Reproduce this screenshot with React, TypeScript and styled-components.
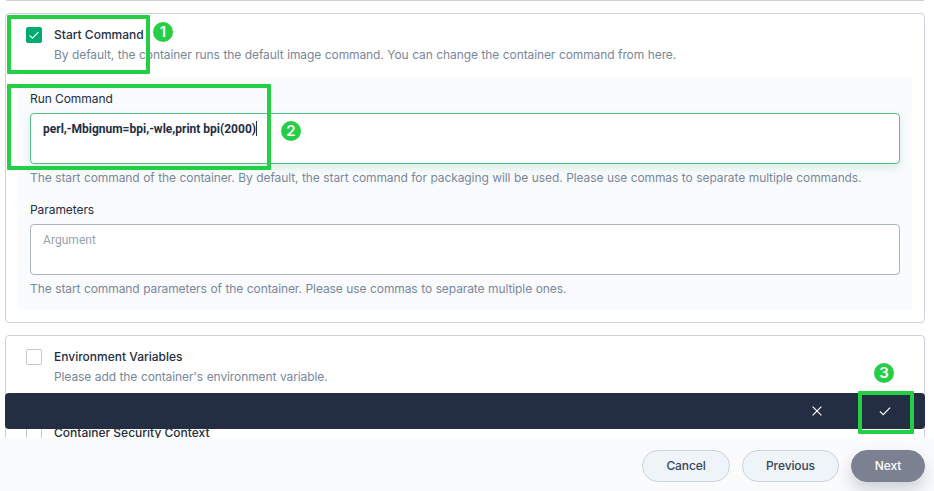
import React from "react";
import styled, { createGlobalStyle, css } from "styled-components";

const GlobalStyle = createGlobalStyle`
  *, *::before, *::after { box-sizing: border-box; }
  body { margin: 0; background: #fff; overflow: hidden; }
`;

const Page = styled.div`
  position: relative;
  display: flex;
  flex-direction: column;
  width: 934px;
  height: 491px;
  overflow: hidden;
  font-family: Inter, "Liberation Sans", sans-serif;
  font-size: 12px;
  line-height: 20px;
  color: #242e42;
`;

const Content = styled.main`
  position: relative;
  display: flex;
  flex-direction: column;
  gap: 12px;
  height: 438px;
  padding: 0 9px 0 5px;
  overflow: hidden;
`;

const Card = styled.section`
  flex: none;
  padding: 11px 12px;
  background: #fff;
  border: 1px solid #ccd3db;
  border-radius: 4px;
`;

const CardEnd = styled.div`
  flex: none;
  height: 1px;
  margin: 0 1px;
  background: #ccd3db;
`;

const CardHeader = styled.header`
  display: flex;
  gap: 12px;
  padding-left: 8px;
`;

const Checkbox = styled.span<{ $checked?: boolean }>`
  display: flex;
  flex: none;
  align-items: center;
  justify-content: center;
  width: 16px;
  height: 16px;
  margin-top: 2px;
  border: 1px solid ${(p) => (p.$checked ? "#00aa72" : "#c1c9d1")};
  border-radius: 2px;
  background: ${(p) => (p.$checked ? "#00aa72" : "#fff")};
`;

const Title = styled.div`
  font-weight: 500;
`;

const Hint = styled.div`
  color: #79879c;
  letter-spacing: -0.1px;
  word-spacing: 0.35px;
  white-space: nowrap;
`;

const Panel = styled.div`
  display: flex;
  flex-direction: column;
  gap: 12px;
  margin-top: 12px;
  padding: 12px;
  background: #f9fbfd;
  border-radius: 4px;
`;

const Field = styled.div`
  display: flex;
  flex-direction: column;
  gap: 4px;
`;

const Label = styled.div`
  letter-spacing: -0.07px;
`;

const TextBox = styled.div<{ $focused?: boolean }>`
  display: flex;
  align-items: flex-start;
  height: 51px;
  padding: 5px 12px;
  font-family: Roboto, sans-serif;
  background: #fff;
  border: 1px solid #abb4be;
  border-radius: 4px;
  ${(p) =>
    p.$focused &&
    css`
      border-color: #55bc8a;
      box-shadow: 0 4px 8px 0 rgba(85, 188, 138, 0.2);
    `}
`;

const Value = styled.span`
  font-weight: 700;
`;

const Caret = styled.span`
  width: 1px;
  height: 15px;
  margin-top: 2px;
  background: #242e42;
`;

const Placeholder = styled.span`
  color: #98a2ae;
  letter-spacing: 0.05px;
`;

const ConfirmBar = styled.div`
  position: absolute;
  right: 9px;
  bottom: 9px;
  left: 5px;
  display: flex;
  align-items: center;
  justify-content: flex-end;
  gap: 52px;
  height: 36px;
  padding-right: 32px;
  background: #242e42;
  border-radius: 4px;
`;

const Footer = styled.footer`
  display: flex;
  gap: 12px;
  justify-content: flex-end;
  height: 53px;
  padding: 12px 9px 0 0;
  background: #f9fbfd;
`;

const Button = styled.button<{ $width: number; $primary?: boolean }>`
  width: ${(p) => p.$width}px;
  height: 32px;
  padding: 0;
  font: 500 12px/20px Inter, sans-serif;
  letter-spacing: -0.1px;
  color: #36435c;
  background: #eff4f9;
  border: 1px solid #ccd3db;
  border-radius: 16px;
  ${(p) =>
    p.$primary &&
    css`
      color: #fff;
      background: #7b8190;
      border-color: #7b8190;
      box-shadow: 0 8px 16px 0 rgba(36, 46, 66, 0.2);
    `}
`;

const Frame = styled.div<{ $x: number; $y: number; $w: number; $h: number }>`
  position: absolute;
  left: ${(p) => p.$x}px;
  top: ${(p) => p.$y}px;
  width: ${(p) => p.$w}px;
  height: ${(p) => p.$h}px;
  border: 4px solid #25cf45;
  border-radius: 1px;
`;

const Step = styled.div<{ $x: number; $y: number }>`
  position: absolute;
  left: ${(p) => p.$x}px;
  top: ${(p) => p.$y}px;
  width: 20px;
  height: 20px;
  font: 600 15px/20px Inter, sans-serif;
  text-align: center;
  color: #fff;
  background: #25cf45;
  border-radius: 50%;
`;

const CheckIcon = () => (
  <svg width="16" height="16" viewBox="0 0 16 16" fill="none" stroke="#fff" strokeWidth="1.2">
    <path d="M2.9 8.4 6.2 11.6 13.1 4.7" />
  </svg>
);

const CloseIcon = () => (
  <svg width="16" height="16" viewBox="0 0 16 16" fill="none" stroke="#fff" strokeWidth="1.2">
    <path d="m3.6 3.6 8.8 8.8M12.4 3.6l-8.8 8.8" />
  </svg>
);

export default function App() {
  return (
    <>
      <GlobalStyle />
      <Page>
        <Content>
          <CardEnd />
          <Card>
            <CardHeader>
              <Checkbox $checked>
                <CheckIcon />
              </Checkbox>
              <div>
                <Title>Start Command</Title>
                <Hint>
                  By default, the container runs the default image command. You can change the container command from here.
                </Hint>
              </div>
            </CardHeader>
            <Panel>
              <Field>
                <Label>Run Command</Label>
                <TextBox $focused>
                  <Value>perl,-Mbignum=bpi,-wle,print bpi(2000)</Value>
                  <Caret />
                </TextBox>
                <Hint>
                  The start command of the container. By default, the start command for packaging will be used. Please use commas to separate multiple commands.
                </Hint>
              </Field>
              <Field>
                <Label>Parameters</Label>
                <TextBox>
                  <Placeholder>Argument</Placeholder>
                </TextBox>
                <Hint>
                  The start command parameters of the container. Please use commas to separate multiple ones.
                </Hint>
              </Field>
            </Panel>
          </Card>
          <Card>
            <CardHeader>
              <Checkbox />
              <div>
                <Title>Environment Variables</Title>
                <Hint>Please add the container's environment variable.</Hint>
              </div>
            </CardHeader>
          </Card>
          <Card>
            <CardHeader>
              <Checkbox />
              <Title>Container Security Context</Title>
            </CardHeader>
          </Card>
          <ConfirmBar>
            <CloseIcon />
            <CheckIcon />
          </ConfirmBar>
        </Content>
        <Footer>
          <Button $width={88}>Cancel</Button>
          <Button $width={97}>Previous</Button>
          <Button $width={74} $primary>
            Next
          </Button>
        </Footer>
        <Frame $x={7} $y={15} $w={143} $h={59} />
        <Step $x={153} $y={22}>1</Step>
        <Frame $x={7} $y={84} $w={264} $h={86} />
        <Step $x={281} $y={121}>2</Step>
        <Frame $x={858} $y={391} $w={56} $h={43} />
        <Step $x={874} $y={363}>3</Step>
      </Page>
    </>
  );
}
